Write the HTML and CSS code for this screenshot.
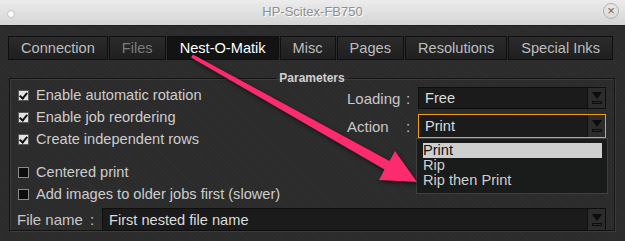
FILE: index.html
```html
<!DOCTYPE html>
<html lang="en">
<head>
  <meta charset="UTF-8" />
  <title>HP-Scitex-FB750</title>
  <link rel="stylesheet" href="styles.css">
</head>
<body>

  <div class="titlebar">
    <span class="dot"></span>
    <span class="title">HP-Scitex-FB750</span>
    <span class="close">&#215;</span>
  </div>

  <div class="window">
    <div class="tabs">
      <div class="tab">Connection</div>
      <div class="tab disabled">Files</div>
      <div class="tab active">Nest-O-Matik</div>
      <div class="tab">Misc</div>
      <div class="tab">Pages</div>
      <div class="tab">Resolutions</div>
      <div class="tab">Special Inks</div>
    </div>

    <fieldset class="group">
      <legend>Parameters</legend>
      <div class="cols">
        <div class="checks">
          <label class="check on"><span class="box"></span>Enable automatic rotation</label>
          <label class="check on"><span class="box"></span>Enable job reordering</label>
          <label class="check on"><span class="box"></span>Create independent rows</label>
          <label class="check spaced"><span class="box"></span>Centered print</label>
          <label class="check"><span class="box"></span>Add images to older jobs first (slower)</label>
        </div>
        <div class="selects">
          <div class="field">
            <span class="name">Loading</span><span class="colon">:</span>
            <div class="combo"><span class="value">Free</span><span class="drop"><svg width="12" height="16" viewBox="0 0 12 16"><path d="M1 2h10L6 9z" fill="#0c0c0c"/><rect x="1.5" y="11.5" width="9" height="2" fill="none" stroke="#0c0c0c"/></svg></span></div>
          </div>
          <div class="field">
            <span class="name">Action</span><span class="colon">:</span>
            <div class="combo focus"><span class="value">Print</span><span class="drop"><svg width="12" height="16" viewBox="0 0 12 16"><path d="M1 2h10L6 9z" fill="#0c0c0c"/><rect x="1.5" y="11.5" width="9" height="2" fill="none" stroke="#0c0c0c"/></svg></span>
              <ul class="popup">
                <li class="sel">Print</li>
                <li>Rip</li>
                <li>Rip then Print</li>
              </ul>
            </div>
          </div>
        </div>
      </div>
      <div class="field file">
        <span class="name">File name</span><span class="colon">:</span>
        <div class="combo"><span class="value">First nested file name</span><span class="drop"><svg width="12" height="16" viewBox="0 0 12 16"><path d="M1 2h10L6 9z" fill="#0c0c0c"/><rect x="1.5" y="11.5" width="9" height="2" fill="none" stroke="#0c0c0c"/></svg></span></div>
      </div>
    </fieldset>
  </div>

  <svg class="pointer" width="625" height="241" viewBox="0 0 625 241">
    <path d="M191 57.5 L193 54.5 L389.5 161 L395 151 L417 182 L379 180 L384.5 169.5 Z" fill="#fb2b6e"/>
  </svg>

</body>
</html>
```

FILE: styles.css
```css
body { margin: 0; width: 625px; height: 241px; overflow: hidden; font-family: "Liberation Sans", Arial, sans-serif; background: #2d2d2d; position: relative; }

.titlebar { height: 25px; border-bottom: 1px solid #1f1f1f; background: linear-gradient(#ececec, #d5d5d5); display: flex; align-items: center; justify-content: center; position: relative; }
.title { font-size: 13px; color: #8f8f8f; text-shadow: 1px 1px 0 #fff; margin-top: -3px; }
.dot { position: absolute; left: 7px; top: 10px; width: 6px; height: 6px; border-radius: 50%; background: #fbfbfb; border: 1px solid #c4c4c4; }
.close { position: absolute; right: 6px; top: 3px; width: 14px; height: 14px; border-radius: 50%; border: 1px solid #b0b0b0; font-size: 13px; line-height: 13px; text-align: center; color: #666; }

.window { padding: 10px 10px 0 8px; background: repeating-linear-gradient(45deg, #2f2f2f 0 1px, #2b2b2b 1px 3px); height: 215px; }

.tabs { display: flex; gap: 1px; }
.tab { flex: none; white-space: nowrap; height: 22px; line-height: 22px; padding: 0 12px; font-size: 14.6px; color: #bdbdbd; border: 1px solid #0f0f0f; background: linear-gradient(#2b2b2b, #1f1f1f); }
.tab.disabled { color: #7c7c7c; }
.tab.active { color: #fff; background: #131313; }

.group { margin: 12px 0 0 1px; padding: 0 8px 5px 8px; border: 1px solid #141414; box-shadow: 1px 1px 0 #3c3c3c, inset 1px 1px 0 #3c3c3c; height: 152px; }
.group legend { margin: 0 auto; padding: 0 3px; font-size: 12px; font-weight: bold; color: #d0d0d0; line-height: 12px; }

.cols { display: flex; justify-content: space-between; }
.checks { display: flex; flex-direction: column; }
.check { display: flex; align-items: center; height: 22px; font-size: 14.6px; color: #cdcdcd; white-space: nowrap; }
.check.spaced { margin-top: 11px; }
.box { width: 9px; height: 9px; margin-right: 7px; border: 1px solid #8a8a8a; background: #0c0c0c; position: relative; }
.check.on .box { background: #e2e2e2; border-color: #5a5a5a; }
.check.on .box::after { content: ""; position: absolute; left: 2px; top: 0; width: 3px; height: 6px; border: solid #111; border-width: 0 2px 2px 0; transform: rotate(40deg); }

.selects { display: flex; flex-direction: column; gap: 5px; padding-top: 3px; width: 259px; }
.field { display: flex; align-items: center; font-size: 15px; color: #c8c8c8; }
.name { width: 56px; }
.colon { width: 10px; margin-right: 5px; text-align: center; }
.combo { position: relative; flex: 1; height: 20px; border: 1px solid #0e0e0e; background: #1b1b1b; display: flex; align-items: center; }
.combo.focus { border-color: #f29f0c; height: 22px; }
.value { flex: 1; padding-left: 6px; color: #dcdcdc; font-size: 14.6px; }
.drop { width: 17px; height: 100%; background: #2c2c2c; border-left: 1px solid #101010; display: flex; align-items: center; justify-content: center; }

.popup { position: absolute; left: -3px; top: calc(100% + 1px); width: 179px; margin: 0; padding: 4px 5px 5px 6px; list-style: none; background: #1a1b1b; border: 1px solid #3f3f3f; z-index: 2; }
.popup li { font-size: 14.6px; line-height: 15px; height: 15px; color: #cfcfcf; }
.popup li.sel { background: #cfcfcf; color: #111; }

.field.file { margin-top: 3px; }
.field.file .name { width: 70px; margin-left: -1px; }
.field.file .combo { height: 21px; }

.pointer { position: absolute; left: 0; top: 0; filter: drop-shadow(1px 2px 2px rgba(0,0,0,0.55)); z-index: 3; }
```
